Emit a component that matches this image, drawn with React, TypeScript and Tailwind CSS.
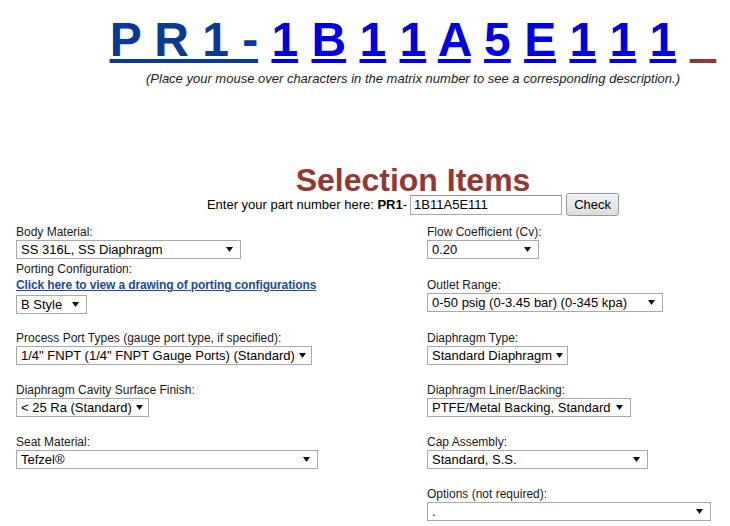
const FONT = "font-['Liberation_Sans',Arial,sans-serif]";

const matrix = ["1", "B", "1", "1", "A", "5", "E", "1", "1", "1"];

function Arrow() {
  return (
    <svg width="7" height="5" viewBox="0 0 7 5" className="shrink-0">
      <path d="M0 0h7L3.5 5z" fill="#111" />
    </svg>
  );
}

function FakeSelect({ value, width }: { value: string; width: number }) {
  return (
    <div
      style={{ width }}
      className="flex h-[19px] items-center justify-between gap-[4px] border border-[#a9a9a9] bg-white pl-[4px] pr-[7px] text-[13px] leading-[17px] text-black"
    >
      <span className="whitespace-pre">{value}</span>
      <Arrow />
    </div>
  );
}

function Label({ children, className = "" }: { children: string; className?: string }) {
  return <div className={`text-[12px] leading-[15px] text-[#1a1a1a] ${className}`}>{children}</div>;
}

export default function App() {
  return (
    <div className={`h-[526px] w-[730px] overflow-hidden bg-white ${FONT}`}>
      <div className="w-[826px]">
        {/* matrix number */}
        <div className="mt-[12px] whitespace-pre text-center text-[48px] font-bold leading-[55px]">
          <span className="text-[#0a3a94] underline">P R 1 -</span>
          {matrix.map((c, i) => (
            <span key={i}>
              {" "}
              <a className="cursor-pointer text-[#0000e0] underline">{c}</a>
            </span>
          ))}
          {" "}
          <span className="text-transparent underline decoration-[#943634]">_</span>
        </div>
        <div className="mt-[4px] text-center text-[13px] italic leading-[15px] text-[#222]">
          (Place your mouse over characters in the matrix number to see a corresponding description.)
        </div>

        <h1 className="mt-[81px] text-center text-[32px] font-bold leading-[26px] text-[#943634]">
          Selection Items
        </h1>
        <div className="flex h-[23px] items-center justify-center whitespace-pre text-[13px] text-black">
          <span>Enter your part number here: </span>
          <b>PR1</b>
          <span>-</span>
          <div className="ml-[3px] flex h-[20px] w-[152px] items-center border border-[#a9a9a9] border-t-[#8e8e8e] pl-[3px]">
            1B11A5E111
          </div>
          <button className="ml-[4px] h-[23px] w-[53px] rounded-[3px] border border-[#8f9aac] bg-gradient-to-b from-[#f4f4f4] to-[#dcdcdc] text-[13px]">
            Check
          </button>
        </div>

        <div className="mt-[9px] grid grid-cols-2">
          {/* left column */}
          <div className="pl-4">
            <Label>Body Material:</Label>
            <FakeSelect value="SS 316L, SS Diaphragm" width={225} />
            <Label className="mt-[3px]">Porting Configuration:</Label>
            <a className="mt-[1px] block cursor-pointer text-[12px] font-bold leading-[15px] tracking-[-0.12px] text-[#1e4a9a] underline">
              Click here to view a drawing of porting configurations
            </a>
            <div className="mt-[2px]">
              <FakeSelect value="B Style" width={71} />
            </div>
            <Label className="mt-[17px]">Process Port Types (gauge port type, if specified):</Label>
            <FakeSelect value={'1/4" FNPT (1/4" FNPT Gauge Ports) (Standard)'} width={296} />
            <Label className="mt-[18px]">Diaphragm Cavity Surface Finish:</Label>
            <FakeSelect value="< 25 Ra (Standard)" width={133} />
            <Label className="mt-[18px]">Seat Material:</Label>
            <FakeSelect value="Tefzel®" width={302} />
          </div>

          {/* right column */}
          <div className="pl-[14px]">
            <Label>Flow Coefficient (Cv):</Label>
            <FakeSelect value="0.20" width={112} />
            <Label className="mt-[19px]">Outlet Range:</Label>
            <FakeSelect value="0-50 psig (0-3.45 bar) (0-345 kpa)" width={236} />
            <Label className="mt-[19px]">Diaphragm Type:</Label>
            <FakeSelect value="Standard Diaphragm" width={141} />
            <Label className="mt-[18px]">Diaphragm Liner/Backing:</Label>
            <FakeSelect value="PTFE/Metal Backing, Standard" width={204} />
            <Label className="mt-[18px]">Cap Assembly:</Label>
            <FakeSelect value="Standard, S.S." width={221} />
            <Label className="mt-[18px]">Options (not required):</Label>
            <FakeSelect value="." width={284} />
          </div>
        </div>
      </div>
    </div>
  );
}
